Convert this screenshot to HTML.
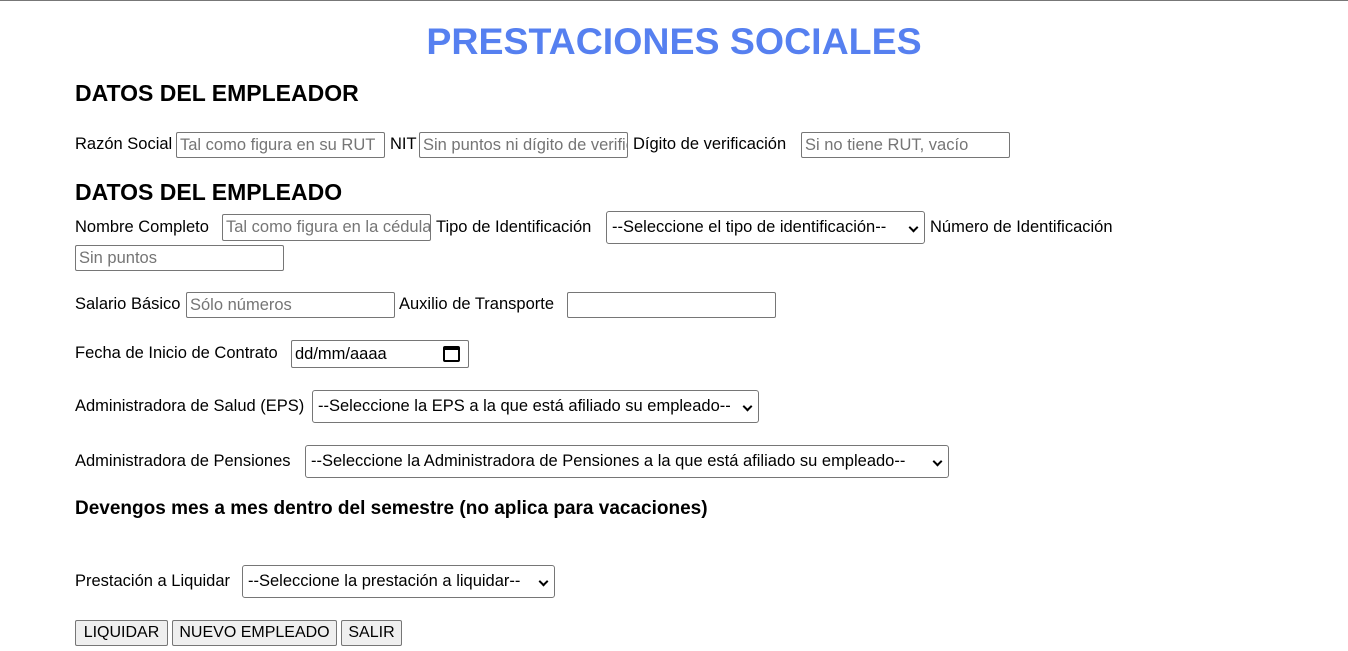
<!DOCTYPE html>
<html><head><meta charset="utf-8"><style>
*{box-sizing:border-box;margin:0;padding:0}
body{width:1348px;height:651px;background:#fff;position:relative;overflow:hidden;font-family:"Liberation Sans",sans-serif;color:#000;border-top:1px solid #777}
.a{position:absolute;white-space:nowrap}
.l{font-size:16.5px;line-height:20px}
.i{position:absolute;border:1px solid #767676;border-radius:2px;background:#fff;font-size:16.5px;color:#757575;padding:0 3px;line-height:24px;overflow:hidden;white-space:nowrap}
.s{position:absolute;border:1px solid #767676;border-radius:3px;background:#fff;font-size:16.5px;color:#000;padding:0 22px 0 5px;line-height:31px;white-space:nowrap;overflow:hidden}
.s:after{content:"";position:absolute;right:7px;top:12px;width:5px;height:5px;border-right:2px solid #000;border-bottom:2px solid #000;transform:rotate(45deg)}
.b{position:absolute;top:619px;height:26px;border:1px solid #767676;border-radius:2px;background:#efefef;font-size:16px;line-height:24px;text-align:center}
h2{position:absolute;left:75px;font-size:23px;font-weight:bold;white-space:nowrap}
</style></head><body>
<div class="a" style="left:0;width:1348px;top:17px;text-align:center;font-size:37.5px;font-weight:bold;color:#5680f0;line-height:46px">PRESTACIONES SOCIALES</div>
<h2 style="top:79px">DATOS DEL EMPLEADOR</h2>
<div class="a l" style="left:75px;top:133px">Razón Social</div>
<div class="i" style="left:176px;top:131px;width:209px;height:26px">Tal como figura en su RUT</div>
<div class="a l" style="left:390px;top:133px">NIT</div>
<div class="i" style="left:419px;top:131px;width:209px;height:26px">Sin puntos ni dígito de verificación</div>
<div class="a l" style="left:633px;top:133px">Dígito de verificación</div>
<div class="i" style="left:801px;top:131px;width:209px;height:26px">Si no tiene RUT, vacío</div>
<h2 style="top:178px">DATOS DEL EMPLEADO</h2>
<div class="a l" style="left:75px;top:216px">Nombre Completo</div>
<div class="i" style="left:222px;top:213px;width:209px;height:27px">Tal como figura en la cédula</div>
<div class="a l" style="left:436px;top:216px">Tipo de Identificación</div>
<div class="s" style="left:606px;top:210px;width:319px;height:33px">--Seleccione el tipo de identificación--</div>
<div class="a l" style="left:930px;top:216px">Número de Identificación</div>
<div class="i" style="left:75px;top:244px;width:209px;height:26px">Sin puntos</div>
<div class="a l" style="left:75px;top:293px">Salario Básico</div>
<div class="i" style="left:186px;top:291px;width:209px;height:26px">Sólo números</div>
<div class="a l" style="left:399px;top:293px">Auxilio de Transporte</div>
<div class="i" style="left:567px;top:291px;width:209px;height:26px"></div>
<div class="a l" style="left:75px;top:342px">Fecha de Inicio de Contrato</div>
<div class="i" style="left:291px;top:339px;width:178px;height:28px;color:#000;line-height:26px">dd/mm/aaaa<span style="position:absolute;right:8px;top:5px;width:17px;height:16px;border:2px solid #000;border-top-width:4px;border-radius:2px"></span></div>
<div class="a l" style="left:75px;top:395px">Administradora de Salud (EPS)</div>
<div class="s" style="left:312px;top:389px;width:447px;height:33px">--Seleccione la EPS a la que está afiliado su empleado--</div>
<div class="a l" style="left:75px;top:450px">Administradora de Pensiones</div>
<div class="s" style="left:305px;top:444px;width:644px;height:33px">--Seleccione la Administradora de Pensiones a la que está afiliado su empleado--</div>
<div class="a" style="left:75px;top:497px;font-size:19px;font-weight:bold;line-height:22px">Devengos mes a mes dentro del semestre (no aplica para vacaciones)</div>
<div class="a l" style="left:75px;top:570px">Prestación a Liquidar</div>
<div class="s" style="left:242px;top:564px;width:313px;height:33px">--Seleccione la prestación a liquidar--</div>
<div class="b" style="left:75px;width:93px">LIQUIDAR</div>
<div class="b" style="left:172px;width:165px">NUEVO EMPLEADO</div>
<div class="b" style="left:341px;width:61px">SALIR</div>
</body></html>
